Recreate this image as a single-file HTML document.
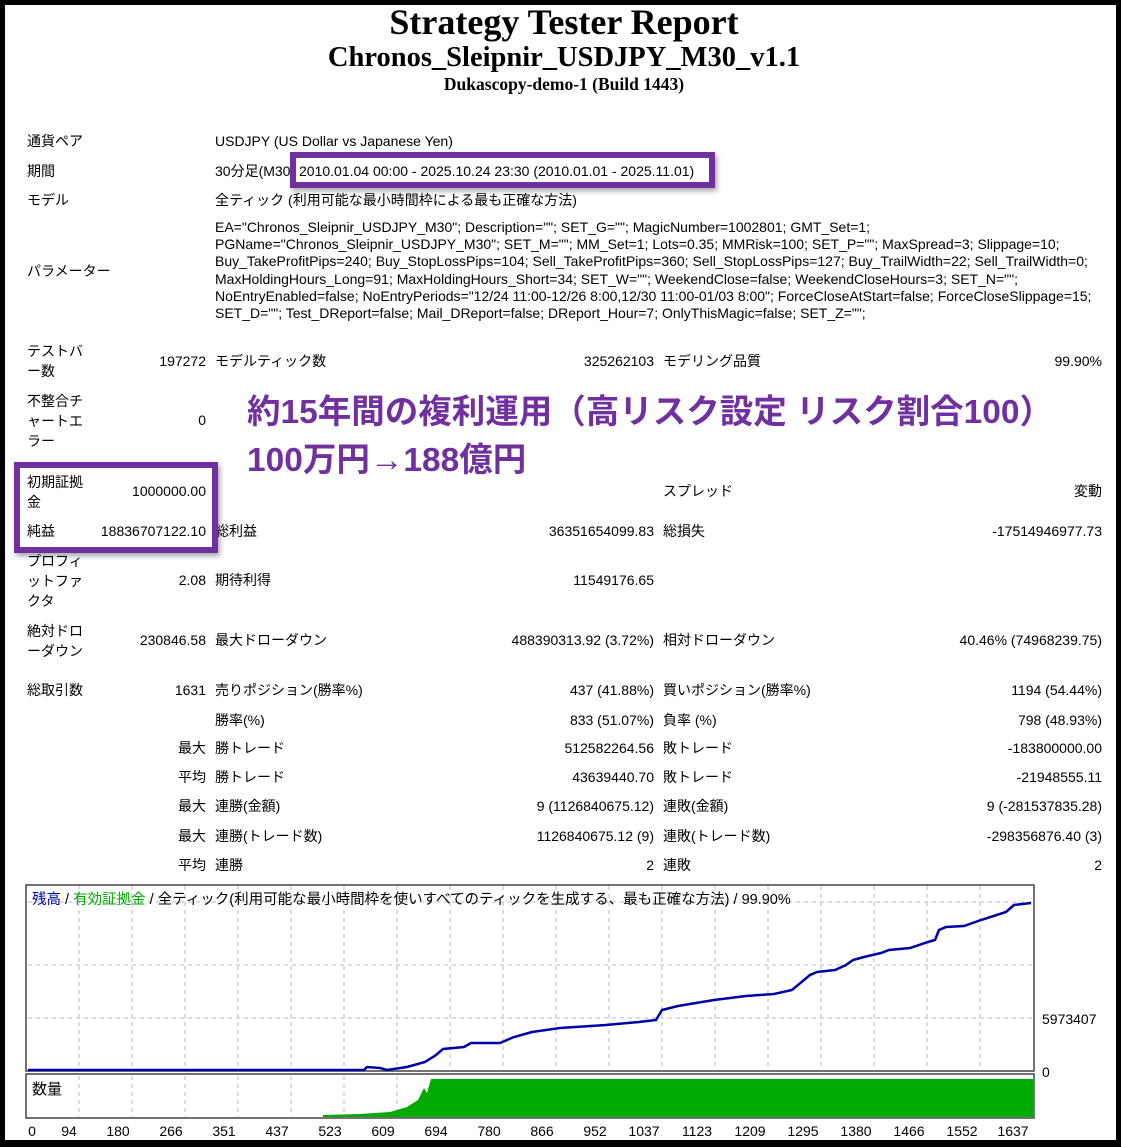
<!DOCTYPE html>
<html><head><meta charset="utf-8">
<style>
*{margin:0;padding:0;box-sizing:border-box}
body{width:1121px;height:1147px;background:#000;position:relative;overflow:hidden;font-family:"Liberation Sans","Noto Sans CJK JP",sans-serif;font-size:14px;color:#000}
#pg{position:absolute;left:5px;top:5px;width:1111px;height:1135px;background:#fff}
.t{position:absolute;white-space:nowrap;line-height:18px}
.r{text-align:right}
.h{position:absolute;left:0;width:1128px;text-align:center;font-family:"Liberation Serif",serif;font-weight:bold;white-space:nowrap}
.p{font-size:14px;letter-spacing:0px}
.big{position:absolute;color:#7030a0;font-family:"Liberation Sans","Noto Sans CJK JP",sans-serif;font-weight:bold;font-size:33.5px;white-space:nowrap;line-height:40px}
.box{position:absolute;border:6px solid #7030a0;box-shadow:2px 3px 5px rgba(0,0,0,.35)}
</style></head><body>
<div id="pg"></div>
<div class="h" style="top:2px;font-size:36px;line-height:40px">Strategy Tester Report</div>
<div class="h" style="top:42px;font-size:28.5px;line-height:32px">Chronos_Sleipnir_USDJPY_M30_v1.1</div>
<div class="h" style="top:74px;font-size:17.5px;line-height:20px">Dukascopy-demo-1 (Build 1443)</div>

<div class="t" style="left:27px;top:132px">通貨ペア</div>
<div class="t" style="left:215px;top:132px">USDJPY (US Dollar vs Japanese Yen)</div>
<div class="t" style="left:27px;top:162px">期間</div>
<div class="t" style="left:215px;top:162px">30分足(M30) 2010.01.04 00:00 - 2025.10.24 23:30 (2010.01.01 - 2025.11.01)</div>
<div class="box" style="left:290px;top:152px;width:425px;height:36px"></div>
<div class="t" style="left:27px;top:191px">モデル</div>
<div class="t" style="left:215px;top:191px">全ティック (利用可能な最小時間枠による最も正確な方法)</div>
<div class="t" style="left:27px;top:262px">パラメーター</div>
<div class="t p" style="left:215px;top:218px">EA="Chronos_Sleipnir_USDJPY_M30"; Description=""; SET_G=""; MagicNumber=1002801; GMT_Set=1;</div>
<div class="t p" style="left:215px;top:235px">PGName="Chronos_Sleipnir_USDJPY_M30"; SET_M=""; MM_Set=1; Lots=0.35; MMRisk=100; SET_P=""; MaxSpread=3; Slippage=10;</div>
<div class="t p" style="left:215px;top:252px">Buy_TakeProfitPips=240; Buy_StopLossPips=104; Sell_TakeProfitPips=360; Sell_StopLossPips=127; Buy_TrailWidth=22; Sell_TrailWidth=0;</div>
<div class="t p" style="left:215px;top:270px">MaxHoldingHours_Long=91; MaxHoldingHours_Short=34; SET_W=""; WeekendClose=false; WeekendCloseHours=3; SET_N="";</div>
<div class="t p" style="left:215px;top:287px">NoEntryEnabled=false; NoEntryPeriods="12/24 11:00-12/26 8:00,12/30 11:00-01/03 8:00"; ForceCloseAtStart=false; ForceCloseSlippage=15;</div>
<div class="t p" style="left:215px;top:304px">SET_D=""; Test_DReport=false; Mail_DReport=false; DReport_Hour=7; OnlyThisMagic=false; SET_Z="";</div>

<div class="t" style="left:27px;top:342px">テストバ<br><span style="position:relative;top:2px">ー数</span></div>
<div class="t r" style="left:100px;width:106px;top:352px">197272</div>
<div class="t" style="left:215px;top:352px">モデルティック数</div>
<div class="t r" style="left:500px;width:154px;top:352px">325262103</div>
<div class="t" style="left:663px;top:352px">モデリング品質</div>
<div class="t r" style="left:900px;width:202px;top:352px">99.90%</div>

<div class="t" style="left:27px;top:391px;line-height:20px">不整合チ<br>ャートエ<br>ラー</div>
<div class="t r" style="left:100px;width:106px;top:411px">0</div>

<div class="big" style="left:247px;top:393px">約15年間の複利運用（高リスク設定 リスク割合100）</div>
<div class="big" style="left:247px;top:441px">100万円→188億円</div>

<div class="t" style="left:27px;top:472px;line-height:20px">初期証拠<br>金</div>
<div class="t r" style="left:100px;width:106px;top:482px">1000000.00</div>
<div class="t" style="left:663px;top:482px">スプレッド</div>
<div class="t r" style="left:900px;width:202px;top:482px">変動</div>
<div class="t" style="left:27px;top:522px">純益</div>
<div class="t r" style="left:80px;width:126px;top:522px">18836707122.10</div>
<div class="t" style="left:215px;top:522px">総利益</div>
<div class="t r" style="left:450px;width:204px;top:522px">36351654099.83</div>
<div class="t" style="left:663px;top:522px">総損失</div>
<div class="t r" style="left:900px;width:202px;top:522px">-17514946977.73</div>
<div class="box" style="left:14px;top:462px;width:204px;height:91px"></div>

<div class="t" style="left:27px;top:551px;line-height:20px">プロフィ<br>ットファ<br>クタ</div>
<div class="t r" style="left:100px;width:106px;top:571px">2.08</div>
<div class="t" style="left:215px;top:571px">期待利得</div>
<div class="t r" style="left:450px;width:204px;top:571px">11549176.65</div>

<div class="t" style="left:27px;top:621px;line-height:20px">絶対ドロ<br>ーダウン</div>
<div class="t r" style="left:100px;width:106px;top:631px">230846.58</div>
<div class="t" style="left:215px;top:631px">最大ドローダウン</div>
<div class="t r" style="left:450px;width:204px;top:631px">488390313.92 (3.72%)</div>
<div class="t" style="left:663px;top:631px">相対ドローダウン</div>
<div class="t r" style="left:900px;width:202px;top:631px">40.46% (74968239.75)</div>

<div class="t" style="left:27px;top:681px">総取引数</div>
<div class="t r" style="left:100px;width:106px;top:681px">1631</div>
<div class="t" style="left:215px;top:681px">売りポジション(勝率%)</div>
<div class="t r" style="left:450px;width:204px;top:681px">437 (41.88%)</div>
<div class="t" style="left:663px;top:681px">買いポジション(勝率%)</div>
<div class="t r" style="left:900px;width:202px;top:681px">1194 (54.44%)</div>

<div class="t" style="left:215px;top:711px">勝率(%)</div>
<div class="t r" style="left:450px;width:204px;top:711px">833 (51.07%)</div>
<div class="t" style="left:663px;top:711px">負率 (%)</div>
<div class="t r" style="left:900px;width:202px;top:711px">798 (48.93%)</div>

<div class="t r" style="left:100px;width:106px;top:739px">最大</div>
<div class="t" style="left:215px;top:739px">勝トレード</div>
<div class="t r" style="left:450px;width:204px;top:739px">512582264.56</div>
<div class="t" style="left:663px;top:739px">敗トレード</div>
<div class="t r" style="left:900px;width:202px;top:739px">-183800000.00</div>

<div class="t r" style="left:100px;width:106px;top:768px">平均</div>
<div class="t" style="left:215px;top:768px">勝トレード</div>
<div class="t r" style="left:450px;width:204px;top:768px">43639440.70</div>
<div class="t" style="left:663px;top:768px">敗トレード</div>
<div class="t r" style="left:900px;width:202px;top:768px">-21948555.11</div>

<div class="t r" style="left:100px;width:106px;top:797px">最大</div>
<div class="t" style="left:215px;top:797px">連勝(金額)</div>
<div class="t r" style="left:450px;width:204px;top:797px">9 (1126840675.12)</div>
<div class="t" style="left:663px;top:797px">連敗(金額)</div>
<div class="t r" style="left:900px;width:202px;top:797px">9 (-281537835.28)</div>

<div class="t r" style="left:100px;width:106px;top:827px">最大</div>
<div class="t" style="left:215px;top:827px">連勝(トレード数)</div>
<div class="t r" style="left:450px;width:204px;top:827px">1126840675.12 (9)</div>
<div class="t" style="left:663px;top:827px">連敗(トレード数)</div>
<div class="t r" style="left:900px;width:202px;top:827px">-298356876.40 (3)</div>

<div class="t r" style="left:100px;width:106px;top:856px">平均</div>
<div class="t" style="left:215px;top:856px">連勝</div>
<div class="t r" style="left:450px;width:204px;top:856px">2</div>
<div class="t" style="left:663px;top:856px">連敗</div>
<div class="t r" style="left:900px;width:202px;top:856px">2</div>

<svg style="position:absolute;left:0;top:0" width="1121" height="1147">
<g stroke="#bbb" stroke-dasharray="4,4" stroke-width="1" fill="none">
<line x1="28" y1="902" x2="1033" y2="902"/><line x1="28" y1="965" x2="1033" y2="965"/><line x1="28" y1="1018" x2="1033" y2="1018"/>
<path d="M79 886V1070M132 886V1070M185 886V1070M238 886V1070M291 886V1070M344 886V1070M397 886V1070M450 886V1070M503 886V1070M556 886V1070M609 886V1070M662 886V1070M715 886V1070M768 886V1070M821 886V1070M874 886V1070M927 886V1070M980 886V1070"/>
<path d="M79 1076V1117M132 1076V1117M185 1076V1117M238 1076V1117M291 1076V1117M344 1076V1117M397 1076V1117"/>
</g>
<polygon fill="#00aa00" points="323,1117 323,1115 360,1114 390,1112 407,1107 418,1100 424,1088 427,1093 431,1079 1033,1079 1033,1117"/>
<rect x="26" y="885" width="1008" height="186" fill="none" stroke="#444" stroke-width="1.5"/>
<rect x="26" y="1074" width="1008" height="44" fill="none" stroke="#444" stroke-width="1.5"/>
<polyline fill="none" stroke="#0000aa" stroke-width="2.5" points="28,1070 364,1070 367,1067 380,1068 387,1070 407,1067 425,1062 436,1055 443,1049 464,1047 471,1043 500,1043 514,1037 532,1032 560,1028 606,1025 639,1022 656,1020 662,1010 678,1006 714,1000 746,996 774,994 792,990 810,975 817,972 835,970 846,965 853,960 864,957 881,953 889,950 910,948 928,942 935,940 939,930 946,927 964,926 981,920 1006,912 1014,905 1031,903"/>
<g font-family="Liberation Sans, sans-serif" font-size="14" fill="#000">
<text x="1042" y="1024">5973407</text><text x="1042" y="1077">0</text>
</g>
<g font-family="Liberation Sans, sans-serif" font-size="14" fill="#000" text-anchor="middle">
<text x="32" y="1136">0</text><text x="69" y="1136">94</text><text x="118" y="1136">180</text><text x="171" y="1136">266</text><text x="224" y="1136">351</text><text x="277" y="1136">437</text><text x="330" y="1136">523</text><text x="383" y="1136">609</text><text x="436" y="1136">694</text><text x="489" y="1136">780</text><text x="542" y="1136">866</text><text x="595" y="1136">952</text><text x="644" y="1136">1037</text><text x="697" y="1136">1123</text><text x="750" y="1136">1209</text><text x="803" y="1136">1295</text><text x="856" y="1136">1380</text><text x="909" y="1136">1466</text><text x="962" y="1136">1552</text><text x="1013" y="1136">1637</text>
</g>
<text x="32" y="904" font-family="Liberation Sans, Noto Sans CJK JP, sans-serif" font-size="14.5"><tspan fill="#0000aa">残高</tspan><tspan fill="#000"> / </tspan><tspan fill="#00aa00">有効証拠金</tspan><tspan fill="#000"> / 全ティック(利用可能な最小時間枠を使いすべてのティックを生成する、最も正確な方法) / 99.90%</tspan></text>
<text x="32" y="1094" font-family="Liberation Sans, Noto Sans CJK JP, sans-serif" font-size="15">数量</text>
</svg>
</body></html>
